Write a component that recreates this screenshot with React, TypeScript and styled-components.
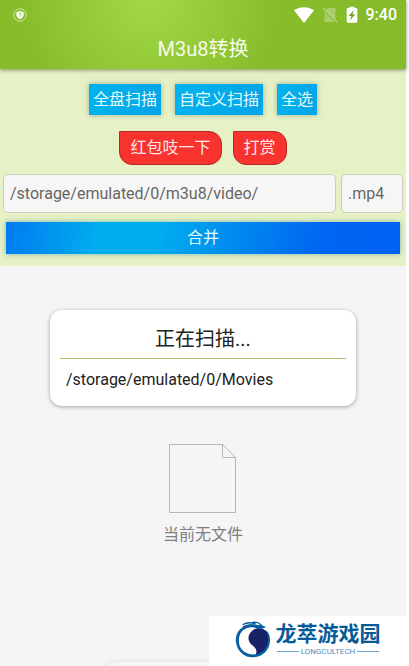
import React from 'react';
import styled, { createGlobalStyle } from 'styled-components';

const GlobalStyle = createGlobalStyle`
  *, *::before, *::after { box-sizing: border-box; }
  body {
    margin: 0;
    background: #fff;
    font-family: Roboto, "Noto Sans CJK SC", sans-serif;
    font-size: 16px;
    color: #222;
  }
  button, input { font: inherit; }
`;

const Page = styled.div`
  position: relative;
  display: flex;
  flex-direction: column;
  min-height: 100vh;
  overflow: hidden;
`;

const Screen = styled.div`
  flex: 1;
  display: flex;
  flex-direction: column;
  margin-right: 3px;
  background: #f5f5f5;
`;

const Header = styled.header`
  position: relative;
  height: 69px;
  color: #fff;
  background: radial-gradient(circle at 37% 0, #a2d746 0, #97cc39 22%, #87bc2b 48%, #86ba2a 100%);
  box-shadow: 0 1px 4px rgba(60, 70, 30, 0.6);
`;

const StatusBar = styled.div`
  display: flex;
  justify-content: space-between;
  align-items: center;
  height: 29px;
  padding: 0 9px 0 13px;
`;

const StatusGroup = styled.div`
  display: flex;
  align-items: center;
  gap: 8px;
`;

const Clock = styled.time`
  font-weight: 500;
  line-height: 20px;
`;

const Title = styled.h1`
  margin: 0;
  font-size: 20px;
  font-weight: 400;
  line-height: 40px;
  text-align: center;
  color: #f6faec;
`;

const Panel = styled.section`
  padding: 15px 3px 12px;
  background: #e6f1c5;
`;

const ButtonRow = styled.div<{ $gap: number }>`
  display: flex;
  justify-content: center;
  gap: ${(p) => p.$gap}px;
  margin-bottom: ${(p) => p.$gap + 2}px;
`;

const ScanButton = styled.button`
  height: 31px;
  padding: 0 4px;
  border: 0;
  line-height: 30px;
  color: #e2fbfa;
  background: linear-gradient(100deg, #00b3ee, #06a4e8);
  box-shadow: 0 0 5px rgba(90, 110, 110, 0.5);
`;

const TipButton = styled.button`
  height: 34px;
  padding: 0 10px;
  border: 1px solid #b32a20;
  border-radius: 0 13px 13px 13px;
  line-height: 30px;
  color: #ffe9e4;
  background: #f7322f;
`;

const PathRow = styled.div`
  display: flex;
  gap: 5px;
  margin-top: -4px;
`;

const TextField = styled.input<{ $width?: number }>`
  flex: ${(p) => (p.$width ? `0 0 ${p.$width}px` : '1')};
  min-width: 0;
  height: 39px;
  padding: 0 6px;
  border: 1px solid #c9cdb9;
  border-radius: 5px;
  color: #666;
  background: #f6f6f6;
`;

const MergeButton = styled.button`
  display: block;
  width: calc(100% - 6px);
  height: 32px;
  margin: 9px 3px 0;
  padding: 0;
  border: 0;
  line-height: 32px;
  color: #e2fbfa;
  background: linear-gradient(100deg, #007bf0 0, #00aeee 24%, #00aeee 38%, #0083f0 62%, #0065f3 80%, #0062f3 100%);
  box-shadow: 0 0 5px rgba(60, 140, 160, 0.6);
`;

const Content = styled.main`
  flex: 1;
  display: flex;
  flex-direction: column;
  align-items: center;
  padding-top: 44px;
`;

const Dialog = styled.section`
  align-self: stretch;
  margin: 0 50px;
  padding: 10px;
  border-radius: 12px;
  background: #fff;
  box-shadow: 0 1px 4px rgba(0, 0, 0, 0.34);
`;

const DialogTitle = styled.h2`
  margin: 0;
  border-bottom: 1px solid #a9c66c;
  font-size: 20px;
  font-weight: 400;
  line-height: 38px;
  text-align: center;
`;

const DialogPath = styled.p`
  margin: 0;
  padding: 5px 6px 0;
  line-height: 32px;
`;

const Empty = styled.div`
  display: flex;
  flex-direction: column;
  align-items: center;
  margin-top: 37px;
  line-height: 24px;
  color: #808080;
  gap: 9px;
`;

const BottomSheet = styled.div`
  position: absolute;
  left: 104px;
  right: 104px;
  bottom: -26px;
  height: 30px;
  border-radius: 12px;
  background: #f6f6f6;
  box-shadow: 0 0 5px rgba(0, 0, 0, 0.12);
`;

const Brand = styled.footer`
  position: absolute;
  right: 0;
  bottom: 0;
  display: flex;
  gap: 3px;
  width: 200px;
  height: 50px;
  padding: 5px 0 0 26px;
  background: #fff;
`;

const BrandText = styled.div`
  display: flex;
  flex-direction: column;
  width: 108px;
  color: #075a98;
`;

const BrandName = styled.strong`
  font-size: 21px;
  font-weight: 700;
  line-height: 26px;
  text-align: center;
`;

const BrandLatin = styled.span`
  display: flex;
  align-items: center;
  gap: 2px;
  margin: 0 3px;
  font-size: 8px;
  line-height: 9px;
  color: #4a90c2;

  &::before, &::after {
    content: "";
    flex: 1;
    height: 1px;
    background: #6ba4ce;
  }
`;

const ShieldIcon = () => (
  <svg width="14" height="14" viewBox="0 0 14 14" aria-hidden="true">
    <circle cx="7" cy="7" r="6.2" fill="none" stroke="#dcefb7" strokeWidth="0.9" />
    <path d="M7 3.1 10.7 4.2V6.5Q10.5 9.6 7 11.2 3.5 9.6 3.3 6.5V4.2Z" fill="#fff" />
    <path d="M5.8 5.3h2v1.6L7 7.6v1" fill="none" stroke="#8dbe3a" strokeWidth="0.9" />
  </svg>
);

const WifiIcon = () => (
  <svg width="20" height="16" viewBox="0 0 20 16" aria-hidden="true">
    <path d="M0 3.3C6-.8 14-.8 20 3.3L10 16Z" fill="#fff" />
  </svg>
);

const NoSimIcon = () => (
  <svg width="16" height="16" viewBox="0 0 16 16" aria-hidden="true">
    <path d="M6 1h7.5v14H2.5V4.5Z" fill="#fff" opacity="0.3" />
    <path d="m1 2.5 13 13" stroke="#86ba2a" strokeWidth="1.2" />
    <path d="m1 1 14 14" stroke="#b7d67e" strokeWidth="1.3" />
  </svg>
);

const BatteryIcon = () => (
  <svg width="12" height="18" viewBox="0 0 12 18" aria-hidden="true">
    <path d="M3.5 2V.8h5V2H10q1.3 0 1.3 1.3v12.2q0 1.3-1.3 1.3H2q-1.3 0-1.3-1.3V3.3Q.7 2 2 2Z" fill="#fff" />
    <path d="M7.8 4 2.6 10h2.8l-1.5 4.5L9.3 8.3H6.4Z" fill="#719f20" />
  </svg>
);

const FileIcon = () => (
  <svg width="69" height="71" viewBox="0 0 69 71" fill="none" stroke="#b5b5b5" aria-hidden="true">
    <path d="M1.500 1.500h53l13 13v55h-66ZM54.500 1.500v13h13" />
  </svg>
);

const BrandMark = () => (
  <svg width="36" height="38" viewBox="0 0 36 38" aria-hidden="true">
    <path d="M21 7.500C32 6 35 14 34 21c-1 8-7 13-14 14 3-5 1-8-3-11-6-5-4-13 4-16.500Z" fill="#182267" />
    <path d="M12 3.900C2 7.500-1 17 1.800 24.800 4 32 11 37 18.500 36.200 28 35.800 34.500 29 35 20c.3-5-1.500-9-4-11 2 4 2.600 8 1.800 12-1.500 8-7 12.500-14 12.500C11 33.500 5.500 29 4.200 23 3 15.500 5.500 9.500 12 7c3-1.200 7-1 11 .5 2 .8 4-.2 6.500-.8L26 4.800c-3-1.300-8-1.800-14-.9Z" fill="#075f9f" />
    <path d="M8 3.500C12 1 16 1.500 20 2.500M18 1.300c4-.6 6 .5 8 2.400M8.500 5.500C14 3 20 4 25 5.500" fill="none" stroke="#075f9f" strokeWidth="1.300" strokeLinecap="round" />
    <path d="M25 3.500 31 6l-3 1.500-4-1Z" fill="#075f9f" />
  </svg>
);

export default function App() {
  return (
    <Page>
      <GlobalStyle />
      <Screen>
        <Header>
          <StatusBar>
            <ShieldIcon />
            <StatusGroup>
              <WifiIcon />
              <NoSimIcon />
              <BatteryIcon />
              <Clock>9:40</Clock>
            </StatusGroup>
          </StatusBar>
          <Title>M3u8转换</Title>
        </Header>
        <Panel>
          <ButtonRow $gap={14}>
            <ScanButton type="button">全盘扫描</ScanButton>
            <ScanButton type="button">自定义扫描</ScanButton>
            <ScanButton type="button">全选</ScanButton>
          </ButtonRow>
          <ButtonRow $gap={11}>
            <TipButton type="button">红包吱一下</TipButton>
            <TipButton type="button">打赏</TipButton>
          </ButtonRow>
          <PathRow>
            <TextField aria-label="路径" defaultValue="/storage/emulated/0/m3u8/video/" />
            <TextField aria-label="格式" defaultValue=".mp4" $width={62} />
          </PathRow>
          <MergeButton type="button">合并</MergeButton>
        </Panel>
        <Content>
          <Dialog role="dialog" aria-labelledby="scan-title">
            <DialogTitle id="scan-title">正在扫描...</DialogTitle>
            <DialogPath>/storage/emulated/0/Movies</DialogPath>
          </Dialog>
          <Empty>
            <FileIcon />
            <span>当前无文件</span>
          </Empty>
        </Content>
      </Screen>
      <BottomSheet />
      <Brand>
        <BrandMark />
        <BrandText>
          <BrandName>龙萃游戏园</BrandName>
          <BrandLatin>LONGCULTECH</BrandLatin>
        </BrandText>
      </Brand>
    </Page>
  );
}
